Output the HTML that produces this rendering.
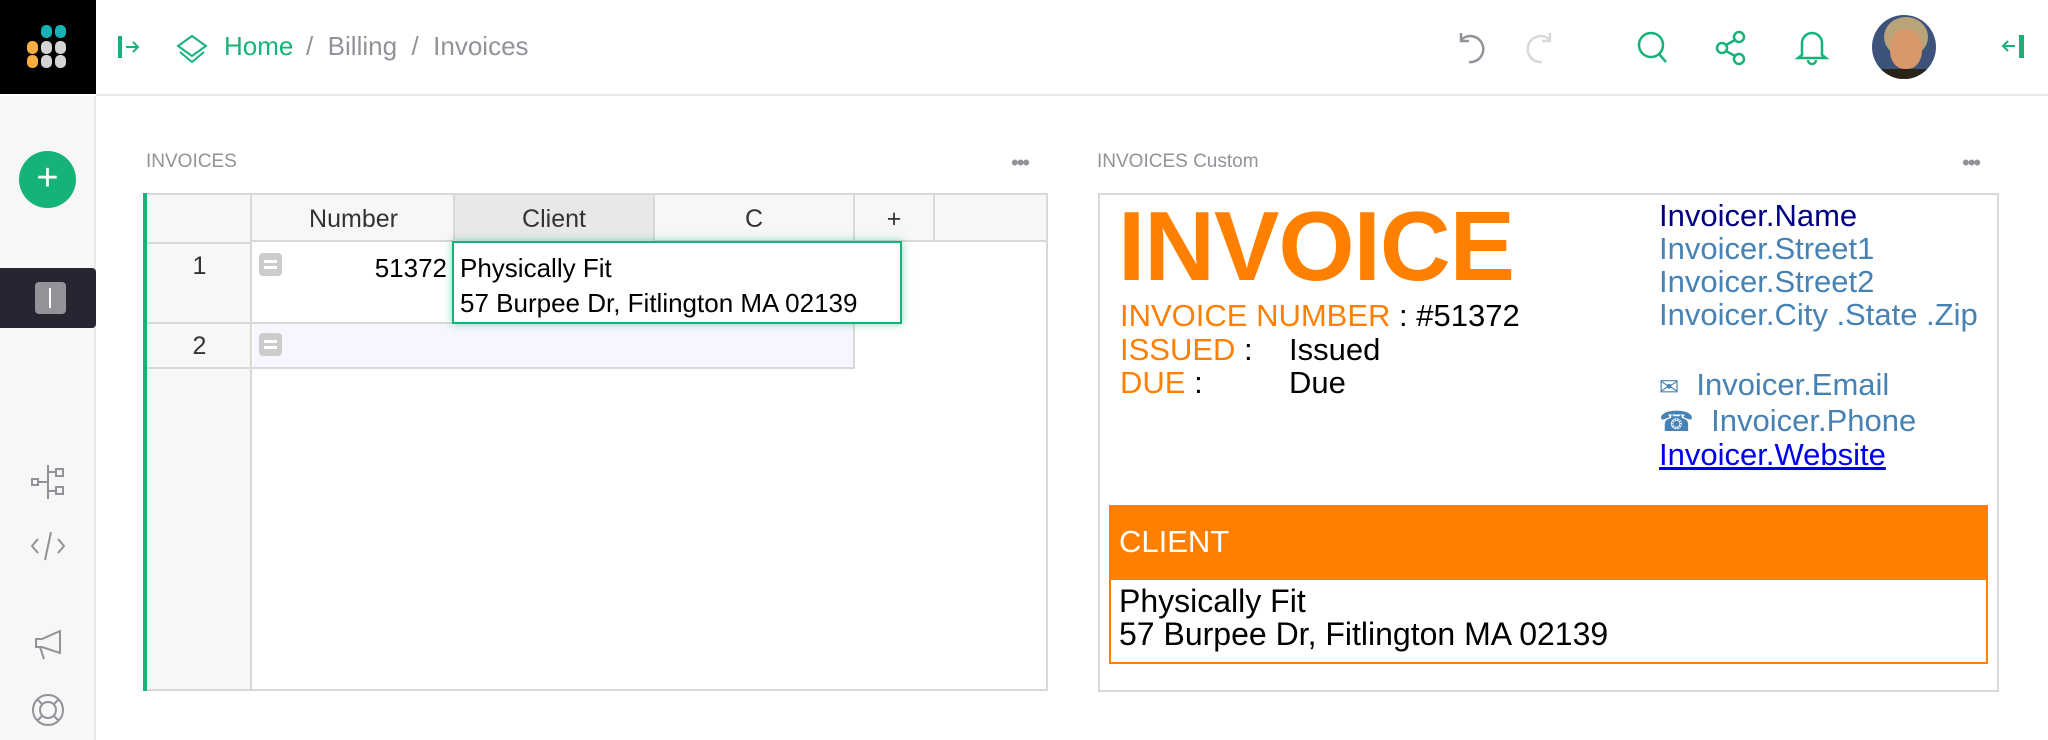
<!DOCTYPE html>
<html><head><meta charset="utf-8"><style>
*{box-sizing:border-box;margin:0;padding:0}
body{width:2048px;height:740px;position:relative;background:#fff;font-family:"Liberation Sans",Arial,sans-serif;overflow:hidden}
.a{position:absolute}
.t{position:absolute;white-space:nowrap}
</style></head><body>
<!-- header -->
<div class="a" style="left:0;top:0;width:96px;height:94px;background:#000"></div>
<svg class="a" style="left:0;top:0" width="96" height="94">
<rect x="41" y="25" width="11" height="13" rx="5" fill="#16b3b6"/><rect x="55" y="25" width="11" height="13" rx="5" fill="#16b3b6"/>
<rect x="27" y="41" width="11" height="13" rx="5" fill="#f9ae41"/><rect x="41" y="41" width="11" height="13" rx="5" fill="#d4d4d4"/><rect x="55" y="41" width="11" height="13" rx="5" fill="#d4d4d4"/>
<rect x="27" y="55" width="11" height="13" rx="5" fill="#f9ae41"/><rect x="41" y="55" width="11" height="13" rx="5" fill="#d4d4d4"/><rect x="55" y="55" width="11" height="13" rx="5" fill="#d4d4d4"/>
</svg>
<div class="a" style="left:96px;top:94px;width:1952px;height:2px;background:#e8e8e8"></div>
<svg class="a" style="left:115px;top:34px" width="30" height="26"><rect x="3" y="2" width="4" height="22" fill="#16b378"/><path d="M11 13h12M18 8l5 5-5 5" stroke="#16b378" stroke-width="2" fill="none"/></svg>
<svg class="a" style="left:174px;top:33px" width="36" height="32"><path d="M18 3l14 10-14 10L4 13z" stroke="#16b378" stroke-width="2" fill="none"/><path d="M6 19l12 10 12-10" stroke="#16b378" stroke-width="2" fill="none"/></svg>
<div class="t" style="left:224px;top:31px;font-size:26px;color:#16b378">Home</div>
<div class="t" style="left:306px;top:31px;font-size:26px;color:#929299">/ &nbsp;Billing &nbsp;/ &nbsp;Invoices</div>
<svg class="a" style="left:1455px;top:30px" width="34" height="36"><path d="M6 10a13 13 0 1 1 8 22" stroke="#929299" stroke-width="2.5" fill="none"/><path d="M6 3v8h8" stroke="#929299" stroke-width="2.5" fill="none"/></svg>
<svg class="a" style="left:1522px;top:30px" width="34" height="36"><path d="M28 10a13 13 0 1 0-8 22" stroke="#d9d9d9" stroke-width="2.5" fill="none"/><path d="M28 3v8h-8" stroke="#d9d9d9" stroke-width="2.5" fill="none"/></svg>
<svg class="a" style="left:1636px;top:30px" width="34" height="36"><circle cx="15" cy="15" r="12" stroke="#16b378" stroke-width="2.5" fill="none"/><path d="M23 24l7 8" stroke="#16b378" stroke-width="2.5"/></svg>
<svg class="a" style="left:1714px;top:30px" width="34" height="36"><circle cx="25" cy="7" r="5" stroke="#16b378" stroke-width="2.5" fill="none"/><circle cx="8" cy="18" r="5" stroke="#16b378" stroke-width="2.5" fill="none"/><circle cx="25" cy="29" r="5" stroke="#16b378" stroke-width="2.5" fill="none"/><path d="M12 15l9-5M12 21l9 5" stroke="#16b378" stroke-width="2.5"/></svg>
<svg class="a" style="left:1794px;top:29px" width="36" height="38"><path d="M8 26V14a10 10 0 0 1 20 0v12l4 3H4z" stroke="#16b378" stroke-width="2.5" fill="none"/><path d="M14 31a4 4 0 0 0 8 0" stroke="#16b378" stroke-width="2.5" fill="none"/></svg>
<div class="a" style="left:1872px;top:15px;width:64px;height:64px;border-radius:50%;overflow:hidden;background:#3c527a">
<div class="a" style="left:12px;top:2px;width:44px;height:40px;border-radius:50%;background:#b9a47a"></div>
<div class="a" style="left:18px;top:14px;width:32px;height:40px;border-radius:45%;background:#d9976c"></div>
<div class="a" style="left:8px;top:54px;width:48px;height:14px;background:#2a2418"></div>
</div>
<svg class="a" style="left:2000px;top:32px" width="30" height="30"><path d="M3 14h12M8 9l-5 5 5 5" stroke="#16b378" stroke-width="2" fill="none"/><rect x="19" y="3" width="5" height="23" fill="#16b378"/></svg>
<!-- sidebar -->
<div class="a" style="left:0;top:96px;width:96px;height:644px;background:#f7f7f7;border-right:2px solid #e8e8e8"></div>
<div class="a" style="left:19px;top:151px;width:57px;height:57px;border-radius:50%;background:#16b378"></div>
<div class="t" style="left:19px;top:151px;width:57px;line-height:55px;text-align:center;color:#fff;font-size:38px;font-weight:300">+</div>
<div class="a" style="left:0;top:268px;width:96px;height:60px;background:#262633;border-radius:0 4px 4px 0"></div>
<div class="a" style="left:35px;top:282px;width:31px;height:32px;background:#929299;border-radius:4px"></div>
<div class="a" style="left:49px;top:288px;width:2px;height:20px;background:#fff"></div>
<svg class="a" style="left:28px;top:464px" width="40" height="36" stroke="#929299" stroke-width="2" fill="none"><rect x="4" y="15" width="6" height="6"/><rect x="28" y="5" width="7" height="7"/><rect x="28" y="23" width="7" height="7"/><path d="M20 1v34M10 18h10M20 8h8M20 27h8"/></svg>
<svg class="a" style="left:28px;top:528px" width="40" height="36" stroke="#929299" stroke-width="2" fill="none"><path d="M10 11l-6 7 6 7M30 11l6 7-6 7M23 4l-6 28"/></svg>
<svg class="a" style="left:30px;top:628px" width="36" height="34" stroke="#929299" stroke-width="2" fill="none"><path d="M30 3v22L12 19H6v-8h6z"/><path d="M10 19l4 12"/></svg>
<svg class="a" style="left:30px;top:692px" width="36" height="36" stroke="#929299" stroke-width="2" fill="none"><circle cx="18" cy="18" r="15"/><circle cx="18" cy="18" r="8"/><path d="M8 8l5 5M28 8l-5 5M8 28l5-5M28 28l-5-5"/></svg>
<!-- left section -->
<div class="t" style="left:146px;top:151px;font-size:19px;color:#929299">INVOICES</div>
<div class="t" style="left:1011px;top:150px;font-size:22px;color:#929299;letter-spacing:-2px">•••</div>
<div class="a" style="left:143px;top:193px;width:905px;height:498px;border:2px solid #d9d9d9;border-left:none"></div>
<div class="a" style="left:143px;top:193px;width:4px;height:498px;background:#16b378"></div>
<div class="a" style="left:147px;top:195px;width:105px;height:494px;background:#f7f7f7;border-right:2px solid #d9d9d9"></div>
<div class="a" style="left:252px;top:195px;width:794px;height:47px;background:#f7f7f7;border-bottom:2px solid #d9d9d9"></div>
<div class="a" style="left:453px;top:195px;width:200px;height:47px;background:#e8e8e8"></div>
<div class="a" style="left:453px;top:195px;width:2px;height:173px;background:#d9d9d9"></div>
<div class="a" style="left:653px;top:195px;width:2px;height:173px;background:#d9d9d9"></div>
<div class="a" style="left:853px;top:195px;width:2px;height:173px;background:#d9d9d9"></div>
<div class="a" style="left:933px;top:195px;width:2px;height:47px;background:#d9d9d9"></div>
<div class="a" style="left:147px;top:242px;width:105px;height:2px;background:#d9d9d9"></div>
<div class="a" style="left:147px;top:322px;width:708px;height:2px;background:#d9d9d9"></div>
<div class="a" style="left:254px;top:324px;width:599px;height:44px;background:#f6f6ff"></div>
<div class="a" style="left:147px;top:367px;width:708px;height:2px;background:#d9d9d9"></div>
<div class="t" style="left:254px;top:205px;width:199px;text-align:center;font-size:25px;color:#333">Number</div>
<div class="t" style="left:455px;top:205px;width:198px;text-align:center;font-size:25px;color:#333">Client</div>
<div class="t" style="left:655px;top:205px;width:198px;text-align:center;font-size:25px;color:#333">C</div>
<div class="t" style="left:855px;top:205px;width:78px;text-align:center;font-size:25px;color:#333">+</div>
<div class="t" style="left:147px;top:252px;width:105px;text-align:center;font-size:25px;color:#333">1</div>
<div class="t" style="left:147px;top:332px;width:105px;text-align:center;font-size:25px;color:#333">2</div>
<div class="a" style="left:259px;top:253px;width:23px;height:23px;background:#ccc;border-radius:4px"></div>
<div class="a" style="left:264px;top:260px;width:13px;height:3px;background:#fff"></div><div class="a" style="left:264px;top:266px;width:13px;height:3px;background:#fff"></div>
<div class="a" style="left:259px;top:333px;width:23px;height:23px;background:#ccc;border-radius:4px"></div>
<div class="a" style="left:264px;top:340px;width:13px;height:3px;background:#fff"></div><div class="a" style="left:264px;top:346px;width:13px;height:3px;background:#fff"></div>
<div class="t" style="left:300px;top:253px;width:147px;text-align:right;font-size:26px;color:#000">51372</div>
<div class="a" style="left:452px;top:241px;width:450px;height:83px;background:#fff;border:2px solid #16b378;box-shadow:0 0 8px rgba(22,179,120,.5)"></div>
<div class="t" style="left:460px;top:253px;font-size:26px;color:#000">Physically Fit</div>
<div class="t" style="left:460px;top:288px;font-size:26px;color:#000">57 Burpee Dr, Fitlington MA 02139</div>
<!-- right section -->
<div class="t" style="left:1097px;top:151px;font-size:19px;color:#929299">INVOICES Custom</div>
<div class="t" style="left:1962px;top:150px;font-size:22px;color:#929299;letter-spacing:-2px">•••</div>
<div class="a" style="left:1098px;top:193px;width:901px;height:499px;border:2px solid #d9d9d9"></div>
<div class="t" style="left:1118px;top:190px;font-size:98px;font-weight:bold;color:#ff8000;letter-spacing:-1px">INVOICE</div>
<div class="t" style="left:1120px;top:298px;font-size:31px;color:#ff8000">INVOICE NUMBER <span style="color:#000">: #51372</span></div>
<div class="t" style="left:1120px;top:332px;font-size:31px;color:#ff8000">ISSUED <span style="color:#000">:</span></div>
<div class="t" style="left:1289px;top:332px;font-size:31px;color:#000">Issued</div>
<div class="t" style="left:1120px;top:365px;font-size:31px;color:#ff8000">DUE <span style="color:#000">:</span></div>
<div class="t" style="left:1289px;top:365px;font-size:31px;color:#000">Due</div>
<div class="t" style="left:1659px;top:199px;font-size:31px;line-height:33px;color:#4682b4"><span style="color:#000080">Invoicer.Name</span><br>Invoicer.Street1<br>Invoicer.Street2<br>Invoicer.City .State .Zip</div>
<div class="t" style="left:1659px;top:367px;font-size:31px;color:#4682b4"><span style="font-size:24px">✉</span>&nbsp; Invoicer.Email</div>
<div class="t" style="left:1659px;top:403px;font-size:31px;color:#4682b4"><span style="font-size:28px">☎</span>&nbsp; Invoicer.Phone</div>
<div class="t" style="left:1659px;top:437px;font-size:31px;color:#0000ee;text-decoration:underline">Invoicer.Website</div>
<div class="a" style="left:1109px;top:505px;width:879px;height:159px;border:2px solid #ff8000"></div>
<div class="a" style="left:1109px;top:505px;width:879px;height:75px;background:#ff8000"></div>
<div class="t" style="left:1119px;top:524px;font-size:31px;color:#fff">CLIENT</div>
<div class="t" style="left:1119px;top:585px;font-size:32px;line-height:33px;color:#000">Physically Fit<br>57 Burpee Dr, Fitlington MA 02139</div>
</body></html>
